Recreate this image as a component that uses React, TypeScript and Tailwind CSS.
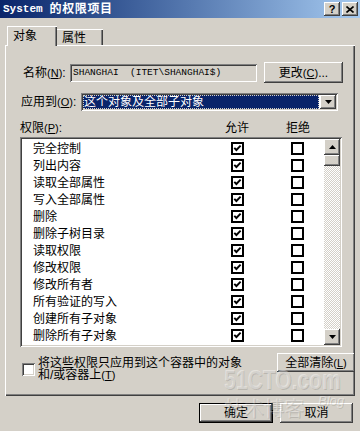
import React from "react";

const raised =
  "shadow-[inset_-1px_-1px_#404040,inset_1px_1px_#ffffff,inset_-2px_-2px_#808080,inset_2px_2px_#d4d0c8]";
const sunken =
  "shadow-[inset_1px_1px_#808080,inset_-1px_-1px_#ffffff,inset_2px_2px_#404040,inset_-2px_-2px_#d4d0c8]";

const rows = [
  "完全控制",
  "列出内容",
  "读取全部属性",
  "写入全部属性",
  "删除",
  "删除子树目录",
  "读取权限",
  "修改权限",
  "修改所有者",
  "所有验证的写入",
  "创建所有子对象",
  "删除所有子对象",
];

function Box({ checked }: { checked: boolean }) {
  return (
    <div className="flex h-[13px] w-[13px] items-center justify-center border-2 border-black bg-white">
      {checked && (
        <svg width="9" height="9" viewBox="0 0 9 9">
          <path d="M1.3 3.8 L3.4 6 L7.6 1.6" fill="none" stroke="#000" strokeWidth="1.9" />
        </svg>
      )}
    </div>
  );
}

function Arrow({ up }: { up?: boolean }) {
  return (
    <svg width="7" height="4" viewBox="0 0 7 4">
      {up ? <path d="M3.5 0 L7 4 L0 4 Z" fill="#000" /> : <path d="M0 0 L7 0 L3.5 4 Z" fill="#000" />}
    </svg>
  );
}

function Acc({ c }: { c: string }) {
  return (
    <span className="font-['Liberation_Sans',sans-serif] text-[11px]">
      (<span className="underline">{c}</span>)
    </span>
  );
}

export default function App() {
  return (
    <div className="relative h-[431px] w-[360px] overflow-hidden bg-[#d4d0c8] text-[12px] leading-none text-black font-['Liberation_Sans','Noto_Sans_CJK_SC',sans-serif]">
      {/* Title bar */}
      <div className="flex h-[18px] items-center justify-between bg-gradient-to-r from-[#0a246a] to-[#a6caf0] pl-[3px] pr-[2px]">
        <div className="flex items-center font-bold text-white">
          <span className="font-['Liberation_Mono',monospace] text-[11px]">System</span>
          <span className="ml-[7px] text-[12px] tracking-[0.6px]">的权限项目</span>
        </div>
        <div className="flex gap-[2px]">
          <div className={`flex h-[14px] w-[16px] items-center justify-center bg-[#d4d0c8] ${raised}`}>
            <span className="text-[11px] font-bold font-['Liberation_Sans',sans-serif]">?</span>
          </div>
          <div className={`flex h-[14px] w-[16px] items-center justify-center bg-[#d4d0c8] ${raised}`}>
            <svg width="8" height="7" viewBox="0 0 8 7">
              <path d="M0.5 0.5 L7.5 6.5 M7.5 0.5 L0.5 6.5" stroke="#000" strokeWidth="1.6" />
            </svg>
          </div>
        </div>
      </div>

      {/* Tabs */}
      <div className="flex h-[27px] items-end pl-[7px]">
        <div className="relative z-10 -mb-[1px] flex h-[20px] w-[50px] items-center bg-[#d4d0c8] pl-[6px] shadow-[inset_1px_1px_#ffffff,inset_-1px_0_#404040,inset_-2px_0_#808080]">
          对象
        </div>
        <div className="flex h-[16px] w-[46px] items-center bg-[#d4d0c8] pl-[5px] pt-[2px] shadow-[inset_0_1px_#ffffff,inset_-1px_0_#404040,inset_-2px_0_#808080]">
          属性
        </div>
      </div>

      {/* Panel */}
      <div className="ml-[5px] h-[351px] w-[350px] pl-[15px] pt-[17px] shadow-[inset_1px_1px_#ffffff,inset_-1px_-1px_#404040,inset_-2px_-2px_#808080]">
        {/* Name row */}
        <div className="flex h-[21px] items-center">
          <span className="ml-[3px] w-[47px] whitespace-nowrap">
            名称<Acc c="N" />:
          </span>
          <div className={`flex h-[18px] w-[187px] items-center bg-[#d4d0c8] pl-[3px] ${sunken}`}>
            <span className="whitespace-pre font-['Liberation_Mono',monospace] text-[9.5px]">SHANGHAI  (ITET\SHANGHAI$)</span>
          </div>
          <div className={`ml-[7px] flex h-[21px] w-[79px] items-center justify-center bg-[#d4d0c8] ${raised}`}>
            <span className="whitespace-nowrap">
              更改<Acc c="C" />...
            </span>
          </div>
        </div>

        {/* Apply row */}
        <div className="mt-[10px] flex h-[18px] items-center">
          <span className="ml-[1px] w-[60px] whitespace-nowrap">
            应用到<Acc c="O" />:
          </span>
          <div className={`flex h-[18px] w-[257px] items-center bg-white p-[2px] ${sunken}`}>
            <div className="flex h-[14px] flex-1 items-center bg-[#0a246a] pl-[1px] text-white outline outline-1 outline-dotted outline-[#d4d0c8] -outline-offset-1">
              这个对象及全部子对象
            </div>
            <div className={`ml-[1px] flex h-[14px] w-[16px] items-center justify-center bg-[#d4d0c8] ${raised}`}>
              <Arrow />
            </div>
          </div>
        </div>

        {/* Header */}
        <div className="mt-[10px] flex h-[14px] items-center">
          <span className="w-[205px] whitespace-nowrap">
            权限<Acc c="P" />:
          </span>
          <span>允许</span>
          <span className="ml-[37px]">拒绝</span>
        </div>

        {/* List */}
        <div className={`mt-[2px] flex h-[210px] w-[322px] bg-white p-[2px] ${sunken}`}>
          <div className="flex-1 pt-[1px]">
            {rows.map((r) => (
              <div key={r} className="flex h-[17px] items-center">
                <span className="w-[209px] pl-[11px]">{r}</span>
                <Box checked />
                <div className="ml-[47px]">
                  <Box checked={false} />
                </div>
              </div>
            ))}
          </div>
          <div className="flex w-[16px] flex-col">
            <div className={`flex h-[16px] items-center justify-center bg-[#d4d0c8] ${raised}`}>
              <Arrow up />
            </div>
            <div className={`h-[11px] bg-[#d4d0c8] ${raised}`} />
            <div className="flex-1 bg-[image:repeating-conic-gradient(#d4d0c8_0%_25%,#ffffff_0%_50%)] bg-[length:2px_2px]" />
            <div className={`flex h-[16px] items-center justify-center bg-[#d4d0c8] ${raised}`}>
              <Arrow />
            </div>
          </div>
        </div>

        {/* Bottom row */}
        <div className="mt-[6px] flex">
          <div className="flex w-[243px]">
            <div className={`ml-[2px] mt-[10px] h-[13px] w-[13px] bg-white ${sunken}`} />
            <div className="ml-[3px] mt-[4px] leading-[12px]">
              <div className="whitespace-nowrap">将这些权限只应用到这个容器中的对象</div>
              <div className="whitespace-nowrap">
                和/或容器上<Acc c="T" />
              </div>
            </div>
          </div>
          <div className={`ml-[20px] flex h-[19px] w-[80px] items-center justify-center bg-[#d4d0c8] ${raised}`}>
            <span className="whitespace-nowrap">
              全部清除<Acc c="L" />
            </span>
          </div>
        </div>
      </div>

      {/* Dialog buttons */}
      <div className="mt-[7px] flex justify-end gap-[7px] pr-[7px]">
        <div className="h-[20px] w-[74px] border border-black">
          <div className={`flex h-full w-full items-center justify-center bg-[#d4d0c8] ${raised}`}>确定</div>
        </div>
        <div className={`flex h-[20px] w-[73px] items-center justify-center bg-[#d4d0c8] ${raised}`}>取消</div>
      </div>

      {/* Watermark */}
      <div className="pointer-events-none absolute left-[224px] top-[367px] origin-left scale-x-[0.78] whitespace-nowrap text-[27px] font-bold text-white/40 [text-shadow:1px_1px_0_rgba(0,0,0,0.12)] font-['Liberation_Sans',sans-serif]">
        51CTO.com
      </div>
      <div className="pointer-events-none absolute left-[224px] top-[399px] text-[20px] text-white/30 [text-shadow:1px_1px_0_rgba(0,0,0,0.12)]">
        技术博客
      </div>
      <div className="pointer-events-none absolute left-[318px] top-[394px] text-[13px] italic text-white/40 [text-shadow:1px_1px_0_rgba(0,0,0,0.12)] font-['Liberation_Sans',sans-serif]">
        Blog
      </div>
    </div>
  );
}
